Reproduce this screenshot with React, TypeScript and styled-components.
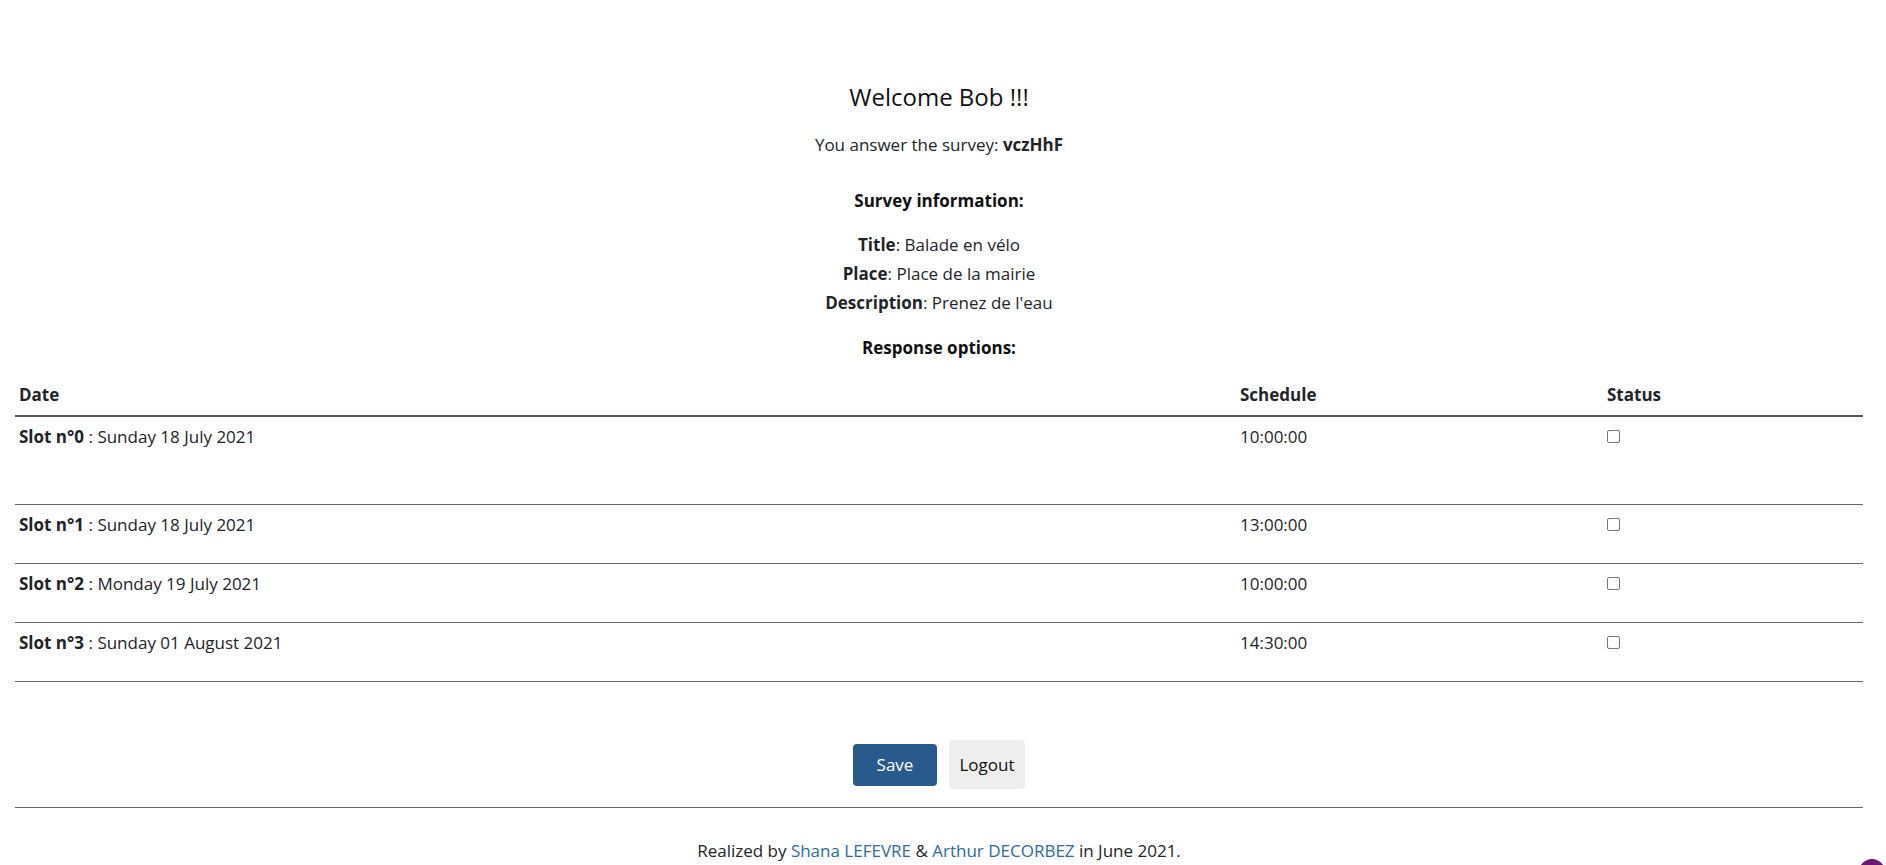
import React from 'react'
import styled, { createGlobalStyle } from 'styled-components'

const GlobalStyle = createGlobalStyle`
  html, body {
    margin: 0;
    padding: 0;
    overflow: hidden;
    background: #ffffff;
  }
  body {
    font-family: 'Open Sans', 'Noto Sans', sans-serif;
    font-size: 17px;
    line-height: 29px;
    color: #212529;
  }
`

const slots = [
  { id: 0, date: 'Sunday 18 July 2021', time: '10:00:00', tall: true },
  { id: 1, date: 'Sunday 18 July 2021', time: '13:00:00', tall: false },
  { id: 2, date: 'Monday 19 July 2021', time: '10:00:00', tall: false },
  { id: 3, date: 'Sunday 01 August 2021', time: '14:30:00', tall: false },
]

export default function App(): JSX.Element {
  return (
    <>
      <GlobalStyle />
      <Page>
        <Welcome>Welcome Bob !!!</Welcome>
        <Intro>
          You answer the survey: <b>vczHhF</b>
        </Intro>

        <SectionTitle $gap={27}>Survey information:</SectionTitle>
        <InfoList>
          <div>
            <b>Title</b>: Balade en vélo
          </div>
          <div>
            <b>Place</b>: Place de la mairie
          </div>
          <div>
            <b>Description</b>: Prenez de l'eau
          </div>
        </InfoList>

        <SectionTitle $gap={16}>Response options:</SectionTitle>

        <Table>
          <thead>
            <tr>
              <HeadCell $width={1213}>Date</HeadCell>
              <HeadCell $width={359}>Schedule</HeadCell>
              <HeadCell>Status</HeadCell>
            </tr>
          </thead>
          <tbody>
            {slots.map((slot) => (
              <tr key={slot.id}>
                <Cell $tall={slot.tall}>
                  <b>Slot n°{slot.id}</b> : {slot.date}
                </Cell>
                <Cell $tall={slot.tall}>{slot.time}</Cell>
                <Cell $tall={slot.tall}>
                  <Checkbox type="checkbox" />
                </Cell>
              </tr>
            ))}
          </tbody>
        </Table>

        <Actions>
          <SaveButton>Save</SaveButton>
          <LogoutButton>Logout</LogoutButton>
        </Actions>

        <Separator />

        <Footer>
          Realized by <Link href="#">Shana LEFEVRE</Link> &amp;{' '}
          <Link href="#">Arthur DECORBEZ</Link> in June 2021.
        </Footer>
      </Page>
      <Bubble />
    </>
  )
}

const Page = styled.div`
  display: flex;
  flex-direction: column;
  align-items: stretch;
  padding: 0 23px 0 15px;
  text-align: center;
`

const Welcome = styled.h3`
  margin: 82px 0 0;
  font-size: 24px;
  line-height: 29px;
  font-weight: 400;
  color: #111;
`

const Intro = styled.p`
  margin: 19px 0 0;

  b {
    font-weight: 700;
  }
`

const SectionTitle = styled.h4<{ $gap: number }>`
  margin: ${(p) => p.$gap}px 0 0;
  font-size: 17px;
  line-height: 29px;
  font-weight: 700;
  color: #111;
`

const InfoList = styled.div`
  margin-top: 15px;
  display: flex;
  flex-direction: column;

  b {
    font-weight: 700;
  }
`

const Table = styled.table`
  margin-top: 14px;
  width: 100%;
  border-collapse: collapse;
  table-layout: fixed;
  text-align: left;
`

const HeadCell = styled.th<{ $width?: number }>`
  width: ${(p) => (p.$width ? `${p.$width}px` : 'auto')};
  padding: 4px 4px 6px;
  font-weight: 700;
  color: #212529;
  border-bottom: 2px solid #555;
  vertical-align: bottom;
`

const Cell = styled.td<{ $tall: boolean }>`
  padding: 5px 4px ${(p) => (p.$tall ? 53 : 24)}px;
  vertical-align: top;
  border-bottom: 1px solid #666;

  b {
    font-weight: 700;
  }
`

const Checkbox = styled.input`
  appearance: none;
  display: block;
  width: 13px;
  height: 13px;
  margin: 8px 0 0;
  border: 1px solid #767676;
  border-radius: 2px;
  background: #fff;
`

const Actions = styled.div`
  margin-top: 58px;
  display: flex;
  justify-content: center;
  align-items: center;
  gap: 12px;
`

const SaveButton = styled.button`
  height: 42px;
  width: 84px;
  border: none;
  border-radius: 4px;
  background: #285a8e;
  color: #fff;
  font-family: inherit;
  font-size: 17px;
  cursor: pointer;
`

const LogoutButton = styled.button`
  height: 49px;
  width: 76px;
  border: none;
  border-radius: 4px;
  background: #eeeeee;
  color: #111;
  font-family: inherit;
  font-size: 17px;
  cursor: pointer;
`

const Separator = styled.hr`
  margin: 18px 0 0;
  border: none;
  border-top: 1px solid #666;
  height: 0;
`

const Footer = styled.footer`
  margin-top: 28px;
  color: #212529;
`

const Link = styled.a`
  color: #2d6aa3;
  text-decoration: none;
`

const Bubble = styled.div`
  position: fixed;
  right: 1px;
  top: 859px;
  width: 26px;
  height: 26px;
  border-radius: 50%;
  background: #6a1a6e;
`
